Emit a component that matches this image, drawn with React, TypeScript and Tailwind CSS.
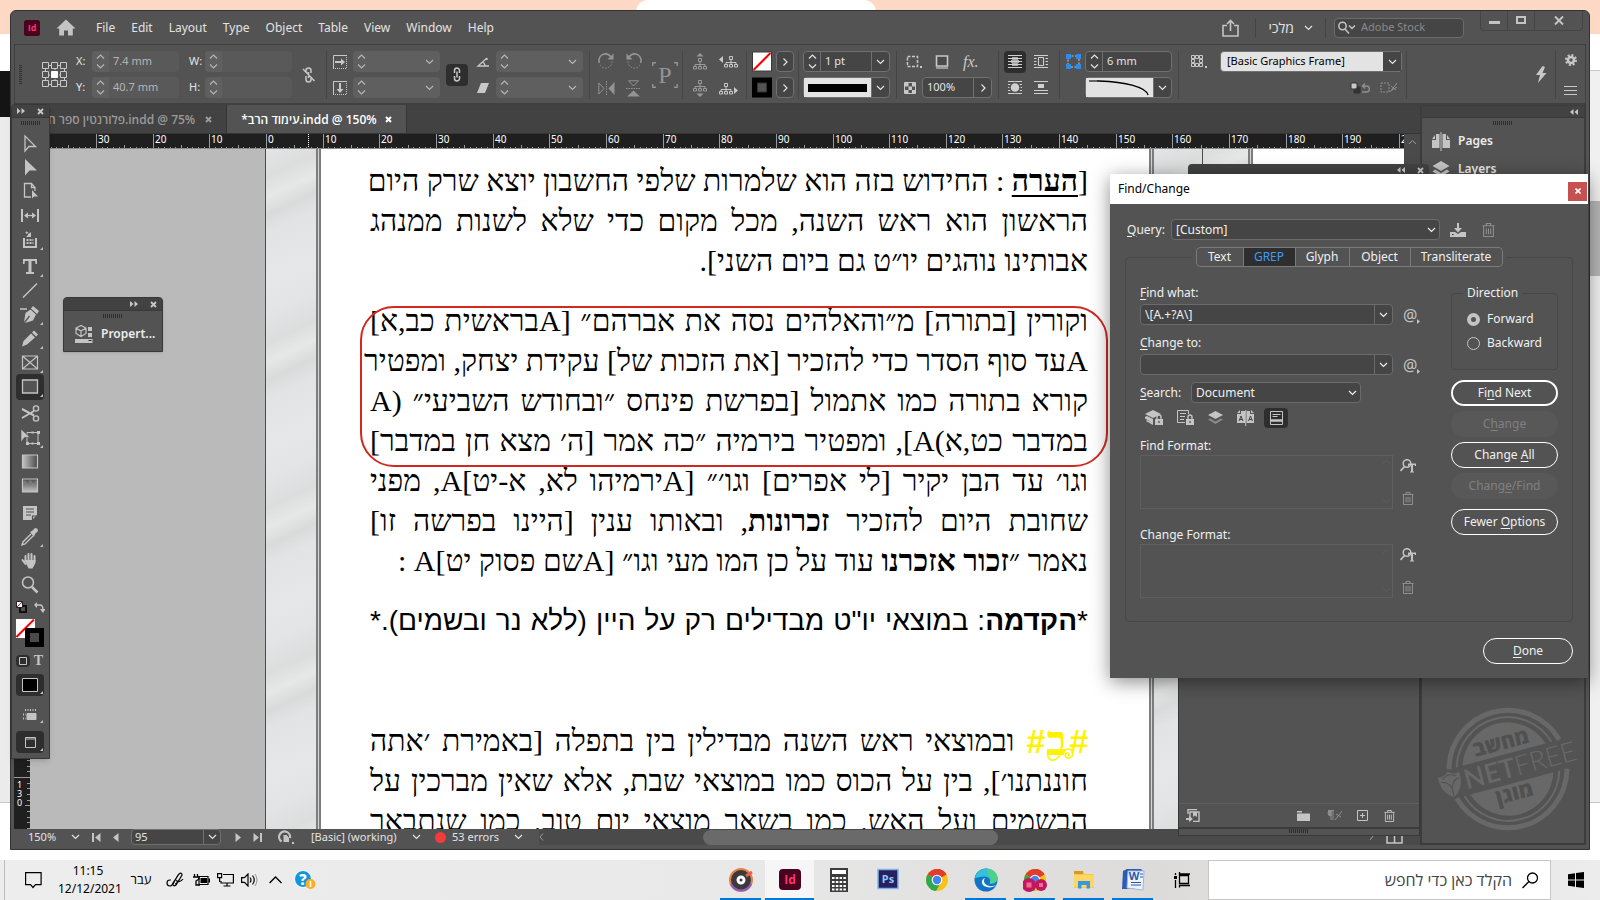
import { useState } from "react";
import type { ReactNode } from "react";

interface IconProps {
  w: number;
  h: number;
  children: ReactNode;
  className?: string;
}

function Icon({ w, h, children, className = "" }: IconProps) {
  return (
    <svg width={w} height={h} viewBox={`0 0 ${w} ${h}`} className={`shrink-0 ${className}`} fill="none" stroke="currentColor" aria-hidden="true">
      {children}
    </svg>
  );
}

function ChevronDown({ className = "" }: { className?: string }) {
  return (
    <Icon w={9} h={6} className={className}>
      <path d="M1 1l3.5 3.5L8 1" strokeWidth="1.2" />
    </Icon>
  );
}

function ChevronRight() {
  return (
    <Icon w={6} h={10}>
      <path d="M1.5 1.5L5 5 1.5 8.5" strokeWidth="1.2" />
    </Icon>
  );
}

function Steppers({ className = "" }: { className?: string }) {
  return (
    <span className={`flex w-[17px] shrink-0 items-center justify-center ${className}`}>
      <Icon w={9} h={15}>
        <path d="M1 4.5L4.5 1 8 4.5M1 10.5L4.5 14 8 10.5" strokeWidth="1.2" />
      </Icon>
    </span>
  );
}

function Sep() {
  return <span className="h-12 w-px shrink-0 bg-[#454545]" />;
}

function Grip({ className = "" }: { className?: string }) {
  return (
    <Icon w={20} h={4} className={className}>
      <path d="M0.5 0v4M2.5 0v4M4.5 0v4M6.5 0v4M8.5 0v4M10.5 0v4M12.5 0v4M14.5 0v4M16.5 0v4M18.5 0v4" stroke="#2e2e2e" />
    </Icon>
  );
}

function PanelHead({ left = false, className = "" }: { left?: boolean; className?: string }) {
  return (
    <div className={`flex h-[13px] items-center justify-end gap-3 border-b border-[#383838] bg-[#424242] pr-[5px] text-[#c8c8c8] ${className}`}>
      <button aria-label="Collapse panel">
        <Icon w={8} h={6}>
          {left ? (
            <path d="M3.5 0L0 3l3.5 3zM8 0L4.5 3 8 6z" fill="currentColor" stroke="none" />
          ) : (
            <path d="M0 0l3.5 3L0 6zM4.5 0L8 3 4.5 6z" fill="currentColor" stroke="none" />
          )}
        </Icon>
      </button>
      <button aria-label="Close panel">
        <Icon w={7} h={7}>
          <path d="M1 1l5 5M6 1L1 6" strokeWidth="1.8" />
        </Icon>
      </button>
    </div>
  );
}

function InDesignLogo({ size }: { size: number }) {
  return (
    <svg width={size} height={size} viewBox="0 0 16 16" aria-hidden="true" className="shrink-0">
      <rect width="16" height="16" rx="2.5" fill="#49021f" />
      <text x="8" y="11.2" textAnchor="middle" fontSize="9" fontWeight="700" fill="#ff3366" stroke="none" className="font-['Open_Sans',sans-serif]">Id</text>
    </svg>
  );
}

function TrashIcon({ w = 12, h = 13 }: { w?: number; h?: number }) {
  return (
    <svg width={w} height={h} viewBox="0 0 12 13" fill="none" stroke="currentColor" aria-hidden="true" className="shrink-0">
      <path d="M0.5 2.5h11M4 2.5v-2h4v2M1.5 2.5v10h9v-10M4 5v5.5M6 5v5.5M8 5v5.5" />
    </svg>
  );
}

const menus = ["File", "Edit", "Layout", "Type", "Object", "Table", "View", "Window", "Help"];

function TitleBar() {
  return (
    <header className="flex h-[33px] shrink-0 items-center pl-[13px] pr-1.5 text-[#e3e3e3]">
      <InDesignLogo size={16} />
      <button aria-label="Home" className="ml-4 text-[#c4c4c4]">
        <Icon w={20} h={17}>
          <path d="M10 0.5L0.5 9.5h2.7V16.5H8v-5h4v5h4.8V9.5h2.7z" fill="currentColor" stroke="none" />
        </Icon>
      </button>
      <nav className="ml-5 flex gap-4 text-xs">
        {menus.map((m) => (
          <button key={m}>{m}</button>
        ))}
      </nav>
      <div className="ml-auto flex items-center">
        <button aria-label="Share" className="text-[#c4c4c4]">
          <Icon w={17} h={18}>
            <path d="M5 6.5H1v10.5h15V6.5h-4M8.5 12V1.5M5 5l3.5-3.5L12 5" strokeWidth="1.6" />
          </Icon>
        </button>
        <span className="ml-4 h-5 w-px bg-[#454545]" />
        <button className="mx-3 flex items-center gap-2.5 text-sm">
          <span className="font-['Open_Sans',sans-serif]">מלכי</span>
          <ChevronDown />
        </button>
        <span className="h-5 w-px bg-[#454545]" />
        <label className="ml-2 flex h-5 w-[130px] items-center gap-1 rounded-sm border border-[#6b6b6b] bg-[#454545] px-0.5 text-[#c4c4c4]">
          <Icon w={20} h={13}>
            <circle cx="5.5" cy="5" r="3.7" strokeWidth="1.5" />
            <path d="M8 8l4 4.5M12 4.5l3 3 3-3" strokeWidth="1.5" />
          </Icon>
          <input aria-label="Search Adobe Stock" placeholder="Adobe Stock" className="w-full min-w-0 bg-transparent text-[11px] outline-none placeholder:text-[#8a8a8a]" />
        </label>
        <div className="mb-3.5 ml-4 flex h-5 rounded-b border border-t-0 border-[#454545] text-[#c4c4c4]">
          <button aria-label="Minimize" className="flex w-[27px] items-center justify-center border-r border-[#454545]">
            <Icon w={11} h={10}><path d="M0 7.5h11" strokeWidth="3" /></Icon>
          </button>
          <button aria-label="Maximize" className="flex w-[27px] items-center justify-center border-r border-[#454545]">
            <Icon w={10} h={8}><path d="M1 1h8v6H1z" strokeWidth="2" /></Icon>
          </button>
          <button aria-label="Close" className="flex w-[47px] items-center justify-center">
            <Icon w={10} h={9}><path d="M1 0.5l8 8M9 0.5l-8 8" strokeWidth="2" /></Icon>
          </button>
        </div>
      </div>
    </header>
  );
}

function DimField({ label, value }: { label: string; value: string }) {
  return (
    <label className="flex h-[21px] items-center text-[11px] text-[#e3e3e3]">
      <span className="w-4">{label}</span>
      <span className="flex h-full w-[87px] overflow-hidden rounded-sm bg-[#595959] text-[#b5b5b5]">
        <Steppers className="bg-[#5f5f5f]" />
        <input defaultValue={value} className="w-full min-w-0 bg-transparent pl-1 outline-none" />
      </span>
    </label>
  );
}

function FlatCombo({ label }: { label: string }) {
  return (
    <span className="flex h-[21px] w-[87px] items-center rounded-sm bg-[#5f5f5f] text-[#b5b5b5]">
      <Steppers />
      <input aria-label={label} className="w-full min-w-0 bg-transparent outline-none" />
      <ChevronDown className="mr-1.5" />
    </span>
  );
}

function SquareButton({ label, children }: { label: string; children: ReactNode }) {
  return (
    <button aria-label={label} className="flex h-[21px] w-[18px] shrink-0 items-center justify-center rounded-sm border border-[#707070] bg-[#454545] text-[#e3e3e3]">
      {children}
    </button>
  );
}

function TextBars({ children }: { children?: ReactNode }) {
  return (
    <Icon w={14} h={14} className="text-[#d0d0d0]">
      <path d="M0 .5h14M0 3.5h14M0 6.5h14M0 9.5h14M0 12.5h14" />
      {children}
    </Icon>
  );
}

function Org({ arrow }: { arrow: "up" | "down" | "left" | "right" }) {
  const side = arrow === "left" || arrow === "right";
  const heads = {
    up: "M7 0l3.5 3.5h-7z",
    down: "M7 17l3.5-3.5h-7z",
    left: "M4 3v7L0 6.5z",
    right: "M15 7v7l4-3.5z",
  };
  const x = arrow === "left" ? 5 : 0;
  const y = arrow === "up" ? 5 : arrow === "down" ? 0 : 3;
  return (
    <Icon w={side ? 19 : 14} h={17} className={side ? "text-[#c8c8c8]" : "text-[#9a9a9a]"}>
      <path d={heads[arrow]} fill="currentColor" stroke="none" />
      <g transform={`translate(${x} ${y})`}>
        <path d="M5.5 .5h3v3h-3zM7 3.5v5M2 8.5v-2h10v2M.5 8.5h3v2.5h-3zM5.5 8.5h3v2.5h-3zM10.5 8.5h3v2.5h-3z" />
      </g>
    </Icon>
  );
}

function ControlBar() {
  return (
    <div className="mx-[3px] flex h-[61px] shrink-0 items-center border border-b-2 border-[#404040] pt-px text-[11px] text-[#c8c8c8]">
      <Icon w={3} h={20} className="ml-1">
        <path d="M0 .5h3M0 2.5h3M0 4.5h3M0 6.5h3M0 8.5h3M0 10.5h3M0 12.5h3M0 14.5h3M0 16.5h3M0 18.5h3" stroke="#303030" />
      </Icon>
      <Icon w={26} h={26} className="ml-5">
        <path d="M3.5 3.5h19v19h-19zM13 3v19M3 13h19" />
        <path d="M.5 .5h6v6h-6zM9.5 .5h6v6h-6zM18.5 .5h6v6h-6zM.5 9.5h6v6h-6zM18.5 9.5h6v6h-6zM.5 18.5h6v6h-6zM9.5 18.5h6v6h-6zM18.5 18.5h6v6h-6z" fill="#535353" />
        <path d="M8 8h9v9H8z" fill="#535353" stroke="none" />
        <path d="M9.5 9.5h6v6h-6z" fill="#fff" stroke="#fff" />
      </Icon>
      <div className="ml-2 flex flex-col gap-[5px]">
        <DimField label="X:" value="7.4 mm" />
        <DimField label="Y:" value="40.7 mm" />
      </div>
      <div className="ml-2.5 flex flex-col gap-[5px]">
        <DimField label="W:" value="" />
        <DimField label="H:" value="" />
      </div>
      <button aria-label="Constrain proportions" className="ml-2.5">
        <Icon w={14} h={16}>
          <path d="M4 5V3.5a2.5 2.5 0 015 0V6M4 9v3.5a2.5 2.5 0 005 0V10M6.5 5v6M1 2l11.5 12" strokeWidth="1.5" />
        </Icon>
      </button>
      <span className="w-2.5" />
      <Sep />
      <div className="ml-1.5 flex flex-col gap-3">
        <Icon w={14} h={14}>
          <path d="M.5 14V.5H14" />
          <path d="M13.5 2v11.5H1" strokeDasharray="1 1" />
          <path d="M2 7h6" strokeWidth="2" />
          <path d="M8 3.5L12 7l-4 3.5z" fill="currentColor" stroke="none" />
        </Icon>
        <Icon w={14} h={14}>
          <path d="M.5 14V.5H14" />
          <path d="M13.5 2v11.5H1" strokeDasharray="1 1" />
          <path d="M7 2v6" strokeWidth="2" />
          <path d="M3.5 8L7 12l3.5-4z" fill="currentColor" stroke="none" />
        </Icon>
      </div>
      <div className="ml-1.5 flex flex-col gap-[5px]">
        <FlatCombo label="Scale X" />
        <FlatCombo label="Scale Y" />
      </div>
      <button aria-label="Link scale" className="ml-1.5 flex size-[22px] items-center justify-center rounded-sm bg-[#2e2e2e]">
        <Icon w={8} h={15}>
          <path d="M1.5 6V3.5a2.5 2.5 0 015 0V6M1.5 9v2.5a2.5 2.5 0 005 0V9M4 4.5v6" strokeWidth="1.5" />
        </Icon>
      </button>
      <div className="ml-2 flex flex-col items-center gap-4">
        <Icon w={14} h={10}><path d="M11 1L2 9h11M6 5q3 1 3 4M11 1v2" strokeWidth="1.3" /></Icon>
        <Icon w={14} h={10}><path d="M5 0h8L9 10H1z" fill="currentColor" stroke="none" /></Icon>
      </div>
      <div className="ml-1.5 flex flex-col gap-[5px]">
        <FlatCombo label="Rotation" />
        <FlatCombo label="Shear" />
      </div>
      <span className="w-1.5" />
      <Sep />
      <div className="ml-2 grid grid-cols-2 gap-x-2.5 gap-y-2.5 text-[#949494]">
        <Icon w={17} h={17}>
          <path d="M1.5 10A6.5 6.5 0 0113 4" strokeWidth="1.6" />
          <path d="M15.5 0.5v6h-6z" fill="currentColor" stroke="none" />
          <path d="M2 12a6.5 6.5 0 0012-4" strokeDasharray="1.5 1.5" />
        </Icon>
        <Icon w={17} h={17}>
          <path d="M15.5 10A6.5 6.5 0 004 4" strokeWidth="1.6" />
          <path d="M1.5 0.5v6h6z" fill="currentColor" stroke="none" />
          <path d="M15 12a6.5 6.5 0 01-12-4" strokeDasharray="1.5 1.5" />
        </Icon>
        <Icon w={17} h={17}>
          <path d="M.8 3v11L6 8.5z" />
          <path d="M16.5 2v13L10.5 8.5z" fill="currentColor" stroke="none" />
          <path d="M8.5 1v15" strokeDasharray="1.5 1" />
        </Icon>
        <Icon w={17} h={17}>
          <path d="M3.5 .8h10L8.5 6z" />
          <path d="M2 16.5h13L8.5 10.5z" fill="currentColor" stroke="none" />
          <path d="M1 8.5h15" strokeDasharray="1.5 1" />
        </Icon>
      </div>
      <span className="relative ml-2.5 flex size-[26px] items-center justify-center font-['Liberation_Serif',serif] text-2xl leading-none text-[#949494]">
        P
        <Icon w={26} h={26} className="absolute inset-0">
          <path d="M.8 4V.8H4M22 .8h3.2V4M.8 22v3.2H4M22 25.2h3.2V22" strokeWidth="1.4" />
        </Icon>
      </span>
      <span className="w-1" />
      <Sep />
      <div className="ml-2.5 grid grid-cols-[14px_19px] gap-x-3 gap-y-2.5">
        <Org arrow="up" />
        <Org arrow="left" />
        <Org arrow="down" />
        <Org arrow="right" />
      </div>
      <span className="w-2" />
      <Sep />
      <div className="ml-[5px] grid grid-cols-[20px_18px] items-center gap-x-1 gap-y-[5px]">
        <Icon w={20} h={21}>
          <path d="M.5 1h19v19H.5z" fill="#fff" stroke="#3a3a3a" />
          <path d="M1.5 19L18.5 2" stroke="#f00" strokeWidth="2" />
        </Icon>
        <SquareButton label="Fill options"><ChevronRight /></SquareButton>
        <Icon w={20} h={21}>
          <path d="M0 .5h20v20H0z" fill="#000" stroke="none" />
          <path d="M5.5 6h9v9h-9z" fill="#535353" stroke="#333" />
        </Icon>
        <SquareButton label="Stroke options"><ChevronRight /></SquareButton>
      </div>
      <span className="w-1" />
      <Sep />
      <div className="ml-1 flex flex-col gap-[5px]">
        <div className="flex h-[21px] w-[87px] rounded-sm border border-[#707070] bg-[#454545] text-[#e3e3e3]">
          <Steppers className="border-r border-[#707070]" />
          <input aria-label="Stroke weight" defaultValue="1 pt" className="w-full min-w-0 bg-transparent pl-1 outline-none" />
          <button aria-label="Weights" className="flex w-[18px] shrink-0 items-center justify-center border-l border-[#707070]"><ChevronDown /></button>
        </div>
        <div className="flex h-[21px] w-[87px] rounded-sm border border-[#707070] bg-[#454545] text-[#e3e3e3]">
          <span className="flex flex-1 items-center bg-[#e3e3e3] px-1"><span className="h-2 w-full bg-black" /></span>
          <button aria-label="Stroke type" className="flex w-[18px] items-center justify-center border-l border-[#707070]"><ChevronDown /></button>
        </div>
      </div>
      <span className="w-1.5" />
      <Sep />
      <div className="ml-[7px] flex flex-col gap-[5px]">
        <div className="flex h-[21px] items-center gap-3 pl-0.5">
          <Icon w={17} h={14}>
            <path d="M1.5 1.5h10v10h-10z" strokeWidth="1.5" strokeDasharray="3 1.5" />
            <path d="M14 11h2v2h-2z" fill="currentColor" stroke="none" />
          </Icon>
          <Icon w={14} h={14}>
            <path d="M1.5 1h11v10h-11z" fill="#4a4a4a" strokeWidth="1.6" />
            <path d="M1 13h12" stroke="#9a9a9a" strokeWidth="2" />
          </Icon>
          <button className="ml-0.5 font-['Liberation_Serif',serif] text-base italic leading-none">fx.</button>
        </div>
        <div className="flex h-[21px] items-center gap-1.5">
          <Icon w={12} h={12}>
            <path d="M.5 .5h11v11H.5z" />
            <path d="M1 1h3.5v3.5H1zM8 1h3v3.5H8zM4.5 4.5H8V8H4.5zM1 8h3.5v3H1zM8 8h3v3H8z" fill="currentColor" stroke="none" />
          </Icon>
          <div className="flex h-full w-[70px] rounded-sm border border-[#707070] bg-[#454545] text-[#e3e3e3]">
            <input aria-label="Opacity" defaultValue="100%" className="w-full min-w-0 bg-transparent pl-1 outline-none" />
            <button aria-label="Opacity slider" className="flex w-[18px] shrink-0 items-center justify-center border-l border-[#707070]"><ChevronRight /></button>
          </div>
        </div>
      </div>
      <span className="w-1.5" />
      <Sep />
      <div className="ml-[5px] grid grid-cols-2 gap-x-1 gap-y-1">
        <button aria-label="No text wrap" className="flex size-[22px] items-center justify-center rounded-sm bg-[#2e2e2e]">
          <TextBars><path d="M4 3.5h6M3 6.5h8M4 9.5h6" strokeWidth="2.4" /></TextBars>
        </button>
        <button aria-label="Wrap around bounding box" className="flex size-[22px] items-center justify-center">
          <TextBars><path d="M3.5 2h7v9h-7z" fill="#535353" stroke="#535353" strokeWidth="2" /><path d="M4.5 2.5h5v8h-5z" /></TextBars>
        </button>
        <button aria-label="Wrap around shape" className="flex size-[22px] items-center justify-center">
          <TextBars><circle cx="7" cy="6.5" r="5" fill="currentColor" stroke="#535353" strokeWidth="1.5" /></TextBars>
        </button>
        <button aria-label="Jump object" className="flex size-[22px] items-center justify-center">
          <Icon w={14} h={14} className="text-[#d0d0d0]"><path d="M0 .5h14M0 9.5h14M0 12.5h14" /><path d="M4 3h6v4H4z" fill="currentColor" stroke="none" /></Icon>
        </button>
      </div>
      <span className="w-[7px]" />
      <Sep />
      <div className="ml-1.5 flex flex-col gap-[5px]">
        <div className="flex h-[21px] items-center gap-1">
          <Icon w={15} h={15}>
            <path d="M2 2h11v11H2z" strokeDasharray="2 1.5" />
            <path d="M0 0h5v5H0zM10 0h5v5h-5zM0 10h5v5H0zM10 10h5v5h-5z" fill="#2d8ceb" stroke="none" />
          </Icon>
          <div className="flex h-full w-[87px] rounded-sm border border-[#707070] bg-[#454545] text-[#e3e3e3]">
            <Steppers className="border-r border-[#707070]" />
            <input aria-label="Corner size" defaultValue="6 mm" className="w-full min-w-0 bg-transparent pl-1 outline-none" />
          </div>
        </div>
        <div className="ml-[19px] flex h-[21px] w-[87px] rounded-sm border border-[#707070] bg-[#454545] text-[#e3e3e3]">
          <span className="flex-1 bg-[#e3e3e3]">
            <Icon w={67} h={19}><path d="M3 3h10C40 4 60 9 62 17" stroke="#000" strokeWidth="1.4" /><path d="M3 3h8" stroke="#666" strokeWidth="2" /></Icon>
          </span>
          <button aria-label="Corner shape" className="flex w-[18px] items-center justify-center border-l border-[#707070]"><ChevronDown /></button>
        </div>
      </div>
      <span className="w-1.5" />
      <Sep />
      <div className="ml-3 flex flex-col gap-[5px]">
        <div className="flex h-[21px] items-center gap-3">
          <Icon w={17} h={14}>
            <path d="M.5 .5h3v3h-3zM4.5 .5h3v3h-3zM8.5 .5h3v3h-3zM.5 4.5h3v3h-3zM8.5 4.5h3v3h-3zM.5 8.5h3v3h-3zM4.5 8.5h3v3h-3zM8.5 8.5h3v3h-3z" />
            <path d="M14 11h2v2h-2z" fill="currentColor" stroke="none" />
          </Icon>
          <div className="relative h-full w-[182px]">
            <select aria-label="Object style" className="h-full w-full appearance-none rounded-sm border border-[#707070] bg-[#e3e3e3] px-1.5 text-[11px] text-black outline-none">
              <option>[Basic Graphics Frame]</option>
            </select>
            <span className="pointer-events-none absolute inset-y-px right-px flex w-[18px] items-center justify-center bg-[#454545] text-[#e3e3e3]"><ChevronDown /></span>
          </div>
        </div>
        <div className="flex h-[21px] items-center justify-end gap-2.5 pr-1 text-[#8f8f8f]">
          <Icon w={20} h={12}>
            <path d="M1 1h6v6H1z" fill="#c8c8c8" stroke="#333" />
            <path d="M4 8v3h6V5H8" fill="#333" stroke="#333" />
            <path d="M13 4h3.5a2.5 2.5 0 010 6H12M15 1.5L12.5 4 15 6.5" strokeWidth="1.4" />
          </Icon>
          <Icon w={18} h={12}>
            <path d="M1 1h8v9H1z" strokeDasharray="2 1" />
            <path d="M17 1l-7 9M11 4l5 4M12 8l5-3" />
          </Icon>
        </div>
      </div>
      <span className="w-1" />
      <Sep />
      <div className="ml-auto flex items-center">
        <button aria-label="Quick apply" className="mr-2">
          <Icon w={12} h={17}><path d="M7.5 0L1 9h4L3 17l8.5-10H7.5L10 1z" fill="currentColor" stroke="none" /></Icon>
        </button>
        <Sep />
        <div className="mx-2 flex flex-col items-center gap-5">
          <Icon w={12} h={12}>
            <circle cx="6" cy="6" r="3" strokeWidth="2.6" />
            <circle cx="6" cy="6" r="5" strokeWidth="2" strokeDasharray="2 1.9" />
          </Icon>
          <Icon w={13} h={9}><path d="M0 .5h13M0 4.5h13M0 8.5h13" /></Icon>
        </div>
      </div>
    </div>
  );
}

function DocumentTabs() {
  return (
    <div className="flex h-[29px] shrink-0 border-b border-[#353535] bg-[#424242] pl-[34px] font-['Open_Sans',sans-serif] text-xs font-semibold">
      <div className="flex items-center gap-2.5 border-r border-[#353535] pr-3.5 pt-px text-[#9a9a9a]">
        <button>פלורנטין ספר ח.indd @ 75%</button>
        <button aria-label="Close tab"><Icon w={7} h={7}><path d="M1 1l5 5M6 1L1 6" strokeWidth="2" /></Icon></button>
      </div>
      <div className="flex items-center gap-2 border-r border-[#353535] bg-[#535353] px-3.5 pt-px text-white">
        <button>*עימוד הרב.indd @ 150%</button>
        <button aria-label="Close tab"><Icon w={7} h={7}><path d="M1 1l5 5M6 1L1 6" strokeWidth="2" /></Icon></button>
      </div>
    </div>
  );
}

const RULER_ZERO = 252;
const RULER_STEP = 56.65;

function HorizontalRuler() {
  const ticks = Array.from({ length: 240 }, (_, i) => i - 38);
  return (
    <div className="flex h-[15px] shrink-0 bg-[#4a4a4a]">
      <svg className="block h-full min-w-0 flex-1 bg-[#1f1f1f]" aria-hidden="true">
        {ticks.map((t) => {
          const x = Math.round(RULER_ZERO + (t * RULER_STEP) / 10) + 0.5;
          const top = t % 10 === 0 ? 0 : t % 5 === 0 ? 11 : 13;
          return <line key={t} x1={x} x2={x} y1={top} y2={15} stroke="#9a9a9a" />;
        })}
        <line x1={294.5} x2={294.5} y1={0} y2={15} stroke="#fff" strokeDasharray="1 1" />
        {ticks.filter((t) => t % 10 === 0).map((t) => (
          <text key={t} x={Math.round(RULER_ZERO + (t * RULER_STEP) / 10) + 2} y={9} fontSize={10} fill="#fff">{Math.abs(t)}</text>
        ))}
        <line x1="0" x2="100%" y1="14.5" y2="14.5" stroke="#8a8a8a" />
      </svg>
      <span className="flex w-4 items-center justify-center text-[#9a9a9a]">
        <Icon w={9} h={6}><path d="M1 5l3.5-3.5L8 5" /></Icon>
      </span>
    </div>
  );
}

function VerticalRuler() {
  const ticks = Array.from({ length: 121 }, (_, i) => i - 102);
  return (
    <svg className="h-full w-4 shrink-0 bg-[#1f1f1f]" aria-hidden="true">
      {ticks.map((t) => {
        const y = Math.round(628 + t * 5.665) + 0.5;
        const left = t % 10 === 0 ? 0 : t % 5 === 0 ? 11 : 13;
        return <line key={t} y1={y} y2={y} x1={left} x2={16} stroke="#9a9a9a" />;
      })}
      {["1", "3", "0"].map((d, i) => (
        <text key={d} x={3} y={639 + i * 9} fontSize={9} fill="#fff">{d}</text>
      ))}
    </svg>
  );
}

function Line({ children, natural = false }: { children: ReactNode; natural?: boolean }) {
  return (
    <p className={`h-10 whitespace-nowrap leading-10 ${natural ? "" : "[text-align-last:justify]"}`}>{children}</p>
  );
}

function PageEdge() {
  return <div className="w-[5px] shrink-0 border-x-2 border-[#7d7d7d] bg-[#d5d5d5]" />;
}

const marble =
  "shrink-0 bg-[repeating-linear-gradient(155deg,#e3e4e5_0px,#dcdddd_26px,#e6e7e7_44px,#d9dbdb_60px,#e2e3e4_76px,#e6e7e8_120px,#e3e4e5_150px)]";

function Canvas() {
  return (
    <div className="flex min-h-0 flex-1 overflow-hidden bg-white">
      <VerticalRuler />
      <div className="w-[235px] shrink-0 bg-[#bababa]" />
      <div className={`w-[51px] border-l border-[#4a4a4a] ${marble}`} />
      <PageEdge />
      <article dir="rtl" className="min-w-0 flex-1 overflow-hidden bg-white pl-[49px] pr-[61px] pt-3 font-['Liberation_Serif',serif] text-[30px] text-black">
        <Line>[<b className="underline decoration-2 underline-offset-4">הערה</b> : החידוש בזה הוא שלמרות שלפי החשבון יוצא שרק היום</Line>
        <Line>הראשון הוא ראש השנה, מכל מקום כדי שלא לשנות ממנהג</Line>
        <Line natural>אבותינו נוהגים יו״ט גם ביום השני].</Line>
        <div className="relative mt-5">
          <div className="pointer-events-none absolute -left-2.5 -right-5 top-[5px] h-[161px] rounded-[34px] border-2 border-[#cf2a20]" />
          <Line>וקורין [בתורה] מ״והאלהים נסה את אברהם״ [Aבראשית כב,א]</Line>
          <Line>Aעד סוף הסדר כדי להזכיר [את הזכות של] עקידת יצחק, ומפטיר</Line>
          <Line>קורא בתורה כמו אתמול [בפרשת פינחס ״ובחודש השביעי״ (A</Line>
          <Line>במדבר כט,א)A], ומפטיר בירמיה ״כה אמר [ה׳ מצא חן במדבר]</Line>
          <Line>וגו׳ עד הבן יקיר [לי אפרים] וגו׳״ [Aירמיהו לא, א-יט]A, מפני</Line>
          <Line>שחובת היום להזכיר <b>זכרונות</b>, ובאותו ענין [היינו בפרשה זו]</Line>
          <Line natural>נאמר ״<b>זכור אזכרנו</b> עוד על כן המו מעי וגו״ [Aשם פסוק יט]A :</Line>
        </div>
        <div className="mt-5 font-['Liberation_Sans',sans-serif] text-[28px]">
          <Line>*<b>הקדמה</b>: במוצאי יו"ט מבדילים רק על היין (ללא נר ובשמים).*</Line>
        </div>
        <div className="mt-20">
          <Line>
            <b className="relative inline-flex h-10 items-center gap-0.5 align-top font-['Liberation_Sans',sans-serif] text-[34px] italic leading-10 text-[#fff200]">
              <span>#</span>
              <span className="font-['Liberation_Serif',serif] text-[42px] not-italic leading-10">ב</span>
              <span>#</span>
              <Icon w={28} h={16} className="absolute left-5 top-[26px]">
                <path d="M2 2C0 12 5 15 10 12s7-11 13-10c5 1 5 8 0 9-4 1-5-4-2-5 2 0 3 2 1 3" strokeWidth="1.5" />
              </Icon>
            </b>{" "}
            ובמוצאי ראש השנה מבדילין בין בתפלה [באמירת ׳אתה
          </Line>
          <Line>חוננתנו׳], בין על הכוס כמו במוצאי שבת, אלא שאין מברכין על</Line>
          <Line>הבשמים ועל האש, כמו בשאר מוצאי יום טוב, כמו שנתבאר</Line>
        </div>
      </article>
      <PageEdge />
      <div className={`w-[94px] ${marble}`}>
        <div className="ml-12 h-full border-l border-[#4a4a4a]" />
      </div>
      <PageEdge />
      <div className="w-[151px] shrink-0" />
      <div className="w-4 shrink-0 bg-[#4a4a4a]" />
    </div>
  );
}

function StatusBar() {
  return (
    <div className="flex h-4 shrink-0 items-center bg-[#4a4a4a] text-[11px] leading-4 text-[#e3e3e3]">
      <div className="flex h-full w-[525px] shrink-0 items-center bg-[#535353] text-[#c4c4c4]">
        <button className="ml-3.5 flex w-[52px] items-center justify-between text-[#e3e3e3]">150%<ChevronDown /></button>
        <button aria-label="First page" className="ml-3"><Icon w={9} h={9}><path d="M1 0v9" strokeWidth="2" /><path d="M8.5 0v9L3 4.5z" fill="currentColor" stroke="none" /></Icon></button>
        <button aria-label="Previous page" className="ml-3"><Icon w={6} h={9}><path d="M5.5 0v9L0 4.5z" fill="currentColor" stroke="none" /></Icon></button>
        <span className="ml-3 flex h-full w-[90px] rounded-sm border border-[#707070] bg-[#454545] text-[#e3e3e3]">
          <input aria-label="Page" defaultValue="95" className="w-full min-w-0 bg-transparent pl-[3px] outline-none" />
          <button aria-label="Page list" className="flex w-[17px] shrink-0 items-center justify-center border-l border-[#707070]"><ChevronDown /></button>
        </span>
        <button aria-label="Next page" className="ml-3.5"><Icon w={6} h={9}><path d="M.5 0v9L6 4.5z" fill="currentColor" stroke="none" /></Icon></button>
        <button aria-label="Last page" className="ml-3"><Icon w={9} h={9}><path d="M8 0v9" strokeWidth="2" /><path d="M.5 0v9L6 4.5z" fill="currentColor" stroke="none" /></Icon></button>
        <Icon w={17} h={14} className="ml-4">
          <path d="M3.5 11.5A5.5 5.5 0 1112 8" strokeWidth="2.2" />
          <path d="M5.5 5h3l2.5 2.5V12H5.5z" fill="currentColor" stroke="none" />
          <path d="M14 12h2v2h-2z" fill="currentColor" stroke="none" />
        </Icon>
        <button className="ml-4 flex w-[110px] items-center justify-between text-[#e3e3e3]">[Basic] (working)<ChevronDown /></button>
        <span className="ml-3.5 size-[11px] rounded-full bg-[#f23b3b]" />
        <button className="ml-1.5 flex w-[71px] items-center justify-between text-[#e3e3e3]">53 errors<ChevronDown /></button>
      </div>
      <Icon w={5} h={8} className="text-[#9a9a9a]"><path d="M4 .5L1 4l3 3.5" /></Icon>
      <div className="ml-[159px] h-[15px] w-[295px] rounded-full bg-[#6a6a6a]" />
      <div className="ml-auto mr-[17px] flex items-start gap-3 text-[#a0a0a0]">
        <Icon w={5} h={14}><path d="M4 6L1 10" /></Icon>
        <Icon w={17} h={14} className="text-[#c8c8c8]"><path d="M1 0v13h15V0M8.5 0v13" strokeWidth="1.5" /></Icon>
      </div>
    </div>
  );
}

function NetFreeSeal() {
  return (
    <svg width="140" height="124" viewBox="0 0 140 124" className="text-[#686868]" aria-hidden="true">
      <g transform="rotate(-15 70 62)" fill="none" stroke="currentColor">
        <path d="M13 47A59 59 0 01127 47M13 77A59 59 0 00127 77" strokeWidth="5" />
        <path d="M21 47A51 51 0 01119 47M21 77A51 51 0 00119 77" strokeWidth="2" />
        <path d="M27 47a45 45 0 0186 0zM27 77a45 45 0 0086 0z" fill="currentColor" stroke="none" />
        <text x="70" y="42" textAnchor="middle" fontSize="21" fontWeight="800" fill="#505050" stroke="none" className="font-['Open_Sans',sans-serif]">מחשב</text>
        <text x="70" y="94" textAnchor="middle" fontSize="21" fontWeight="800" fill="#505050" stroke="none" className="font-['Open_Sans',sans-serif]">מוגן</text>
        <path d="M0 52q6 2 11-3 5 5 11 3 1 17-11 23Q-1 69 0 52z" fill="currentColor" stroke="none" />
        <path d="M2 58q6 0 9 8M20 58q-6 0-9 8v8M4 55q7-5 14 0" stroke="#505050" />
        <text x="25" y="71" fontSize="27" fill="currentColor" stroke="none" className="font-['Lato',sans-serif]">
          NET<tspan fontWeight="300">FREE</tspan>
        </text>
      </g>
    </svg>
  );
}

function Dock() {
  return (
    <aside className="flex w-[166px] shrink-0 flex-col border-2 border-t border-[#3c3c3c] bg-[#535353] text-xs font-semibold text-[#ececec]">
      <div className="flex h-3 items-center justify-end border-b border-[#383838] bg-[#424242] pr-1.5">
        <Icon w={8} h={6}><path d="M3.5 0L0 3l3.5 3zM8 0L4.5 3 8 6z" fill="#c8c8c8" stroke="none" /></Icon>
      </div>
      <Grip className="mx-auto mt-[3px]" />
      <button className="ml-2.5 mt-1.5 flex h-5 items-center gap-2">
        <Icon w={18} h={19} className="text-[#c4c4c4]">
          <path d="M9 0v19" />
          <path d="M0 7l3-4v4zM4 2h3.5v14H0V8h4zM18 7l-3-4v4zM14 2h-3.5v14H18V8h-4z" fill="currentColor" stroke="none" />
        </Icon>
        Pages
      </button>
      <button className="ml-2.5 mt-2 flex h-5 items-center gap-2">
        <Icon w={18} h={16} className="text-[#c4c4c4]">
          <path d="M9 0l8.5 5L9 10 .5 5z" fill="currentColor" stroke="none" />
          <path d="M3 8.5l-2.5 2L9 15.5l8.5-5-2.5-2L9 12z" fill="currentColor" stroke="none" />
        </Icon>
        Layers
      </button>
      <div className="mb-3 ml-4 mt-auto"><NetFreeSeal /></div>
    </aside>
  );
}

const toolGroups: { name: string; more?: boolean; active?: boolean; art: ReactNode }[][] = [
  [
    { name: "Selection", art: <path d="M5 2v15l4-4.5h6.5z" strokeWidth="1.3" /> },
    { name: "Direct Selection", art: <path d="M5 1v16.5l4.5-5H17z" fill="currentColor" stroke="none" /> },
    { name: "Page", art: <><path d="M11 15H4.5V1.5h7L15 5.5V9M11.5 1.5v4H15" strokeWidth="1.3" /><path d="M12 8v8.5l2-2H18z" fill="currentColor" stroke="none" /></> },
    { name: "Gap", art: <><path d="M2 3v13M18 3v13" strokeWidth="2" /><path d="M5 9.5h10" strokeWidth="1.3" /><path d="M4 9.5l4-3v6zM16 9.5l-4-3v6z" fill="currentColor" stroke="none" /></> },
    { name: "Content Collector", more: true, art: <><path d="M4 8v9h12V8" strokeWidth="2" /><path d="M6 2l4 3M6.5 10h7M6.5 13h7" strokeWidth="2" strokeDasharray="2 1" /><path d="M11 2v5H6z" fill="currentColor" stroke="none" /></> },
  ],
  [
    { name: "Type", more: true, art: <path d="M3 2h14v5h-1.5L15 4h-3.5v11H14v2H6v-2h2.5V4H5l-.5 3H3z" fill="currentColor" stroke="none" /> },
    { name: "Line", art: <path d="M3 16.5L17 2.5" strokeWidth="1.5" /> },
    { name: "Pen", more: true, art: <><path d="M0 4h7" strokeWidth="1.5" /><path d="M13 1l6 5-2 3-6-5.5z" fill="currentColor" stroke="none" /><path d="M10.5 4.5l5.5 5-3 6L5 18l5-6.5-1-1L4 17l1.5-9z" fill="currentColor" stroke="none" /></> },
    { name: "Pencil", more: true, art: <path d="M14 1.5l4 4-2 2-4-4zM11 4.5l4 4-8 7-5 2 1.5-5.5z" fill="currentColor" stroke="none" /> },
    { name: "Rectangle Frame", more: true, art: <path d="M2.5 3h15v13h-15zM2.5 3l15 13M17.5 3l-15 13" strokeWidth="1.2" /> },
    { name: "Rectangle", more: true, active: true, art: <path d="M2.5 3h15v13h-15z" strokeWidth="1.3" fill="#535353" /> },
  ],
  [
    { name: "Scissors", art: <><path d="M2 5l12 6.5M2 14L14 7" strokeWidth="2" /><circle cx="16" cy="4.5" r="2.6" strokeWidth="1.4" /><circle cx="16" cy="14.5" r="2.6" strokeWidth="1.4" /></> },
    { name: "Free Transform", more: true, art: <><path d="M7 4.5h11v11H7z" /><path d="M6 14h3v3H6zM17 3h3v3h-3zM17 14h3v3h-3zM11.5 3.5h2v2h-2zM11.5 14.5h2v2h-2z" fill="currentColor" stroke="none" /><path d="M1 1v13l3.5-4.5H10z" fill="currentColor" stroke="#535353" strokeWidth=".6" /></> },
    {
      name: "Gradient",
      art: (
        <>
          <defs><linearGradient id="gh"><stop offset="0" stopColor="#c4c4c4" /><stop offset="1" stopColor="#4a4a4a" /></linearGradient></defs>
          <path d="M2.5 3h15v13h-15z" fill="url(#gh)" strokeWidth="1.2" />
        </>
      ),
    },
    {
      name: "Gradient Feather",
      art: (
        <>
          <defs><linearGradient id="gv" x2="0" y2="1"><stop offset="0" stopColor="#4a4a4a" /><stop offset="1" stopColor="#c4c4c4" /></linearGradient></defs>
          <path d="M2.5 3h15v13h-15z" fill="url(#gv)" strokeWidth="1.2" />
          <path d="M3 6h14M6 9h11" stroke="#8a8a8a" strokeWidth="3" strokeDasharray="3 3" opacity=".5" />
        </>
      ),
    },
  ],
  [
    { name: "Note", art: <><path d="M3 3h14v9l-5 5H3z" fill="currentColor" stroke="none" /><path d="M6 6h8M6 9h8M6 12h5M12.5 17v-4H17" stroke="#535353" strokeWidth="1.2" /></> },
    { name: "Eyedropper", more: true, art: <><path d="M11 7l-8 8-1 3 3-1 8-8" strokeWidth="1.4" /><path d="M10 5l2-1 3-3q3 0 3 3l-3 3-1 3z" fill="currentColor" stroke="none" /></> },
    { name: "Hand", art: <><path d="M5.5 10V5M8.5 9V3M11.5 9V3M14.5 10V5M2.5 9l3 4" strokeWidth="2" strokeLinecap="round" /><path d="M4.5 9h11v3l-3 5.5h-4z" fill="currentColor" stroke="none" /></> },
    { name: "Zoom", art: <><circle cx="8" cy="7.5" r="5.5" strokeWidth="1.5" /><path d="M12 12l5.5 5.5" strokeWidth="2.5" /></> },
  ],
];

function Corner() {
  return (
    <Icon w={3} h={3} className="absolute bottom-0.5 right-px"><path d="M3 0v3H0z" fill="currentColor" stroke="none" /></Icon>
  );
}

function ToolsPanel() {
  return (
    <div className="absolute left-0 top-[93px] z-10 w-[39px] rounded-t border border-[#383838] bg-[#535353] pb-[5px] text-[#c4c4c4] shadow-md">
      <PanelHead className="rounded-t" />
      <Grip className="mx-auto mt-[3px]" />
      <div className="mt-[7px] flex flex-col gap-[3px]">
        {toolGroups.map((group, i) => (
          <div key={i} className="flex flex-col">
            {group.map((t) => (
              <button key={t.name} aria-label={t.name} className="relative ml-1 mr-[5px] flex h-6 items-center justify-center">
                {t.active && <span className="absolute inset-x-0 -inset-y-px rounded-sm bg-[#2e2e2e]" />}
                <Icon w={20} h={20} className="relative">{t.art}</Icon>
                {t.more && <Corner />}
              </button>
            ))}
          </div>
        ))}
      </div>
      <div className="mx-1 mt-0.5 flex h-4 items-center justify-between">
        <Icon w={11} h={12}>
          <path d="M4 5h6v6H4z" stroke="#111" strokeWidth="2" />
          <path d="M.5 .5h6v6h-6z" fill="#fff" stroke="#222" />
          <path d="M1 6l5-5" stroke="#f00" />
        </Icon>
        <Icon w={11} h={12}><path d="M2 4h4q3 0 3 5" strokeWidth="1.4" /><path d="M3 1v6L0 4zM6 8h5.5L9 12z" fill="currentColor" stroke="none" /></Icon>
      </div>
      <Icon w={28} h={28} className="ml-1 mt-1">
        <path d="M0 0h19v19H0z" fill="#fff" stroke="none" />
        <path d="M0.5 18L18 .5" stroke="#f00" strokeWidth="2" />
        <path d="M9 9h19v19H9z" fill="#000" stroke="none" />
        <path d="M14 14h9v9h-9z" fill="#4a4a4a" stroke="none" />
      </Icon>
      <div className="mx-1 mt-2 flex h-3 items-center justify-between">
        <span className="flex h-3 w-3.5 items-center justify-center rounded-sm bg-[#2e2e2e]"><Icon w={8} h={8}><path d="M.5 .5h7v7h-7z" /></Icon></span>
        <span className="pr-0.5 font-['Liberation_Serif',serif] text-sm font-bold leading-3">T</span>
      </div>
      <button aria-label="Apply color" className="relative ml-1 mt-[7px] flex h-[22px] w-7 items-center justify-center rounded-sm bg-[#2e2e2e]">
        <Icon w={16} h={14}><path d="M.5 .5h15v13H.5z" fill="#000" /></Icon>
        <Corner />
      </button>
      <button aria-label="View options" className="relative ml-1 mt-[7px] flex h-[22px] w-7 items-center justify-center">
        <Icon w={14} h={11}><path d="M4 4.5h9v6H4z" fill="currentColor" /><path d="M2 1h12M0 5.5h3M0 9.5h3" strokeDasharray="1 1.5" strokeWidth="2" /></Icon>
        <Corner />
      </button>
      <button aria-label="Screen mode" className="relative ml-1 mt-1.5 flex h-[22px] w-7 items-center justify-center rounded-sm bg-[#2e2e2e]">
        <Icon w={11} h={11}><path d="M.5 .5h10v10H.5zM.5 2h10" /></Icon>
        <Corner />
      </button>
    </div>
  );
}

function PropertiesPanel() {
  return (
    <div className="absolute left-[52px] top-[286px] z-10 h-[55px] w-[100px] rounded-t border border-[#383838] bg-[#535353] shadow">
      <PanelHead className="rounded-t" />
      <Grip className="mx-auto mt-[3px]" />
      <button className="ml-[11px] mt-[7px] flex items-center gap-2 text-xs font-semibold text-[#ececec]">
        <Icon w={18} h={18} className="text-[#c4c4c4]">
          <path d="M6 .5l5 2.5v5.5L6 11.5 1 8.5V3zM1 3l5 3 5-3M6 6v5.5" strokeWidth="1.2" />
          <path d="M13 2h4v4h-4zM13 8h4v4h-4zM0 14h17.5v4H0z" fill="currentColor" stroke="none" />
          <path d="M13.5 15.5h3" stroke="#333" />
        </Icon>
        Propert...
      </button>
    </div>
  );
}

function ParagraphPanel() {
  return (
    <div className="absolute bottom-[13px] right-[169px] z-10 flex h-[210px] w-[242px] flex-col border border-[#383838] bg-[#535353]">
      <div className="flex-1" />
      <div className="flex h-6 items-center gap-[15px] border-t border-[#5f5f5f] pl-[7px] pr-6 text-[#c4c4c4]">
        <button aria-label="Load styles" className="mr-auto"><Icon w={14} h={13}><path d="M2 5V.5h9M4 9V3h9v9.5H7" strokeWidth="1.4" /><path d="M7 3h4v5L9 6.5 7 8zM3 7l4 3-4 3zM0 9h4v2H0z" fill="currentColor" stroke="none" /></Icon></button>
        <button aria-label="New group"><Icon w={13} h={10}><path d="M0 0h5v1.5H0zM0 2.5h13V10H0z" fill="currentColor" stroke="none" /></Icon></button>
        <button aria-label="Clear overrides" className="text-[#8f8f8f]"><Icon w={17} h={11}><path d="M6 0v10M8 0v10M3 .5h6" /><path d="M6 0v6a3 3 0 010-6z" fill="currentColor" /><path d="M17 1l-7 9M11 4l5 3" /></Icon></button>
        <button aria-label="New style"><Icon w={11} h={11}><path d="M.5 .5h10v10H.5zM5.5 3v5M3 5.5h5" /></Icon></button>
        <button aria-label="Delete style" className="ml-px"><TrashIcon w={11} h={12} /></button>
      </div>
      <div className="h-2 border-t-2 border-[#3c3c3c]"><Grip className="mx-auto" /></div>
    </div>
  );
}

function GrepMenuButton() {
  return (
    <button aria-label="Special characters" className="flex items-end text-base leading-[18px] text-[#c4c4c4]">
      @
      <Icon w={3} h={5}><path d="M0 0l3 2.5L0 5z" fill="currentColor" stroke="none" /></Icon>
    </button>
  );
}

function ComboInput({ id, value }: { id: string; value: string }) {
  return (
    <div className="flex h-[21px] w-[253px] rounded-sm border border-[#6b6b6b] bg-[#454545]">
      <input id={id} defaultValue={value} className="w-full min-w-0 bg-transparent pl-1 outline-none" />
      <button aria-label="Recent" className="flex w-[18px] shrink-0 items-center justify-center border-l border-[#6b6b6b]"><ChevronDown /></button>
    </div>
  );
}

function FormatBox({ label, id }: { label: string; id: string }) {
  return (
    <div>
      <label htmlFor={id} className="block h-[19px] leading-5">{label}</label>
      <div className="flex gap-[7px]">
        <div className="relative h-[54px] w-[253px]">
          <textarea id={id} readOnly className="block h-full w-full resize-none border border-[#5f5f5f] bg-transparent outline-none" />
          <span className="absolute bottom-1.5 right-0.5 top-1 flex items-center text-[#5c5c5c]">
            <Icon w={9} h={44}><path d="M1 5l3.5-3.5L8 5M1 40l3.5 3.5L8 40" /></Icon>
          </span>
        </div>
        <div className="flex flex-col items-center justify-between pb-1 pt-1">
          <button aria-label="Specify attributes" className="text-[#c4c4c4]">
            <Icon w={16} h={14}>
              <circle cx="7" cy="4.5" r="3.8" strokeWidth="1.5" />
              <path d="M4.5 7.5L.5 12" strokeWidth="1.7" />
              <path d="M8 4.5h8v2.5h-1L14.5 6H13v6.5h1v1h-4v-1h1V6H9.5L9 7H8z" fill="currentColor" stroke="none" />
            </Icon>
          </button>
          <button aria-label="Clear attributes" className="text-[#8f8f8f]"><TrashIcon w={12} h={13} /></button>
        </div>
      </div>
    </div>
  );
}

const tabs = [
  { name: "Text", width: "w-[46px]" },
  { name: "GREP", width: "w-[52px]" },
  { name: "Glyph", width: "w-[54px]" },
  { name: "Object", width: "w-[61px]" },
  { name: "Transliterate", width: "w-[92px]" },
];

const pill = "block h-[26px] w-full rounded-full";

function FindChangeDialog() {
  const [tab, setTab] = useState("GREP");
  const [direction, setDirection] = useState("Forward");

  return (
    <section role="dialog" aria-label="Find/Change" className="absolute right-px top-[163px] z-20 w-[478px] bg-[#535353] text-xs text-[#f0f0f0] shadow-[0_4px_18px_rgba(0,0,0,0.45)]">
      <div className="flex h-[30px] items-center justify-between bg-white pl-2 pr-px text-black">
        <h2>Find/Change</h2>
        <button aria-label="Close" className="mt-1 flex size-[19px] items-center justify-center bg-[#c75050] text-white">
          <Icon w={6} h={6}><path d="M.5 .5l5 5M5.5 .5l-5 5" strokeWidth="1.6" /></Icon>
        </button>
      </div>

      <div className="px-[15px] pb-[14px] pt-[15px]">
        <div className="flex items-center pl-0.5">
          <label htmlFor="query" className="w-11"><u className="underline-offset-2">Q</u>uery:</label>
          <div className="relative h-[21px] w-[269px]">
            <select id="query" className="h-full w-full appearance-none rounded-sm border border-[#6b6b6b] bg-[#454545] px-1 outline-none">
              <option>[Custom]</option>
            </select>
            <ChevronDown className="pointer-events-none absolute right-1 top-2" />
          </div>
          <button aria-label="Save query" className="ml-2.5 text-[#c4c4c4]">
            <Icon w={16} h={14}>
              <path d="M0 9h5l3 2 3-2h5v5H0z" fill="currentColor" stroke="none" />
              <path d="M8 0v6" strokeWidth="2" />
              <path d="M4 5h8L8 9.5z" fill="currentColor" stroke="none" />
              <path d="M2 11.5h1.5" stroke="#333" />
            </Icon>
          </button>
          <button aria-label="Delete query" className="ml-4 text-[#8f8f8f]"><TrashIcon w={13} h={16} /></button>
        </div>

        <div className="relative z-10 mt-[7px] flex justify-center">
          <div role="tablist" className="flex h-5 rounded-sm border border-[#7a7a7a] bg-[#535353] outline-4 outline-[#535353]">
            {tabs.map((t, i) => (
              <button
                key={t.name}
                role="tab"
                aria-selected={tab === t.name}
                onClick={() => setTab(t.name)}
                className={`${t.width} leading-[18px] ${i > 0 ? "border-l border-[#7a7a7a]" : ""} ${tab === t.name ? "bg-[#2e2e2e] text-[#3f9bf0]" : ""}`}
              >
                {t.name}
              </button>
            ))}
          </div>
        </div>

        <div className="-mt-2.5 flex h-[365px] justify-between rounded-sm border border-[#474747] px-3.5 pt-[25px]">
          <div>
            <label htmlFor="find-what" className="block h-[21px] leading-5"><u className="underline-offset-2">F</u>ind what:</label>
            <div className="flex items-center gap-2.5"><ComboInput id="find-what" value="\[A.+?A\]" /><GrepMenuButton /></div>
            <label htmlFor="change-to" className="mt-2 block h-[21px] leading-5"><u className="underline-offset-2">C</u>hange to:</label>
            <div className="flex items-center gap-2.5"><ComboInput id="change-to" value="" /><GrepMenuButton /></div>
            <div className="mt-[7px] flex items-center">
              <label htmlFor="search" className="w-[51px]"><u className="underline-offset-2">S</u>earch:</label>
              <div className="relative h-[21px] w-[170px]">
                <select id="search" className="h-full w-full appearance-none rounded-sm border border-[#6b6b6b] bg-[#454545] px-1 outline-none">
                  <option>Document</option>
                </select>
                <ChevronDown className="pointer-events-none absolute right-1 top-2" />
              </div>
            </div>
            <div className="mt-[5px] flex items-center gap-3.5 pl-[5px] text-[#c4c4c4]">
              <button aria-label="Include locked layers">
                <Icon w={18} h={16}><path d="M8 0l8 4-8 4-8-4zM0 7l2-1 6 3v4L0 8.5zM2 10l6 3V15L1 11z" fill="currentColor" stroke="none" /><path d="M10 9h8v6h-8z" fill="currentColor" stroke="none" /><path d="M12 9V7a2 2 0 014 0v2" strokeWidth="1.4" /><path d="M14 11v2" stroke="#333" /></Icon>
              </button>
              <button aria-label="Include locked stories">
                <Icon w={17} h={16}><path d="M8 12.5H.5v-12h11V4M3 3.5h6M3 6.5h5M3 9.5h4" /><path d="M9 9h8v6H9z" fill="currentColor" stroke="none" /><path d="M11 9V7a2 2 0 014 0v2" strokeWidth="1.4" /><path d="M13 11v2" stroke="#333" /></Icon>
              </button>
              <button aria-label="Include hidden layers">
                <Icon w={15} h={14}><path d="M7.5 0L15 4 7.5 8 0 4z" fill="currentColor" stroke="none" /><path d="M0 8.5l2-1 5.5 3 5.5-3 2 1-7.5 4.5z" fill="#8a8a8a" stroke="none" /></Icon>
              </button>
              <button aria-label="Include master pages">
                <Icon w={17} h={16}><path d="M0 3l3-3v3zM4 1h4v12H0V4h4zM17 3l-3-3v3zM13 1H9.5v12H17V4h-4z" fill="currentColor" stroke="none" /><path d="M8.7 0v16" /><path d="M2 11l2-5 2 5M2.8 9.5h2.5M11.5 11l2-5 2 5M12.2 9.5h2.5" stroke="#444" /></Icon>
              </button>
              <button aria-label="Include footnotes" className="-ml-1 flex h-5 w-6 items-center justify-center rounded-sm bg-[#2e2e2e]">
                <Icon w={13} h={14}><path d="M.5 .5h12v13H.5zM2.5 3.5h8M2.5 5.5h5" /><path d="M1 9.5h11" strokeWidth="2.5" /></Icon>
              </button>
            </div>
            <div className="mt-2"><FormatBox label="Find Format:" id="find-format" /></div>
            <div className="mt-4"><FormatBox label="Change Format:" id="change-format" /></div>
          </div>

          <div className="w-[107px] pt-0.5">
            <fieldset className="h-[85px] rounded-sm border border-[#474747] pl-[15px] pt-1.5">
              <legend className="-ml-1 px-1">Direction</legend>
              {["Forward", "Backward"].map((d) => (
                <label key={d} className="flex h-6 items-center gap-[7px]">
                  <input
                    type="radio"
                    name="direction"
                    checked={direction === d}
                    onChange={() => setDirection(d)}
                    className="size-[13px] appearance-none rounded-full border border-[#c4c4c4] checked:border-[4px]"
                  />
                  {d}
                </label>
              ))}
            </fieldset>
            <button className={`${pill} mt-2.5 border-2 border-white leading-[22px]`}>Fi<u className="underline-offset-2">n</u>d Next</button>
            <button disabled className={`${pill} mt-[5px] bg-[#585858] leading-6 text-[#808080]`}>C<u className="underline-offset-2">h</u>ange</button>
            <button className={`${pill} mt-[5px] border border-white leading-6`}>Change <u className="underline-offset-2">A</u>ll</button>
            <button disabled className={`${pill} mt-[5px] bg-[#585858] leading-6 text-[#808080]`}>Chang<u className="underline-offset-2">e</u>/Find</button>
            <button className={`${pill} mt-2.5 border border-white leading-6`}>Fewer <u className="underline-offset-2">O</u>ptions</button>
          </div>
        </div>

        <button className="ml-auto mt-4 block h-[26px] w-[90px] rounded-full border border-white leading-6"><u className="underline-offset-2">D</u>one</button>
      </div>
    </section>
  );
}

const chromeArt = (
  <>
    <circle cx="12" cy="12" r="11" fill="#fbc116" stroke="none" />
    <path d="M12 12L2.5 6.5A11 11 0 0121.5 6.5z" fill="#e33b2e" stroke="none" />
    <path d="M12 1a11 11 0 019.5 5.5H12z" fill="#e33b2e" stroke="none" />
    <path d="M2.5 6.5A11 11 0 0011 23l4.5-8L12 12z" fill="#2da94f" stroke="none" />
    <circle cx="12" cy="12" r="5.3" fill="#fff" stroke="none" />
    <circle cx="12" cy="12" r="4.2" fill="#4285f4" stroke="none" />
  </>
);

const apps: { name: string; open?: boolean; active?: boolean; art: ReactNode }[] = [
  {
    name: "Music",
    open: true,
    art: (
      <>
        <circle cx="12" cy="12" r="11" fill="#3a3a3d" stroke="#e8804a" strokeWidth="2" />
        <path d="M2 16a11 11 0 0020 0" stroke="#8a5cc8" strokeWidth="2" />
        <circle cx="12" cy="12" r="3" stroke="#fff" strokeWidth="3" />
        <path d="M17 8l6-4" stroke="#e5604d" strokeWidth="3" />
      </>
    ),
  },
  {
    name: "InDesign",
    open: true,
    active: true,
    art: (
      <>
        <rect x="1" y="1" width="22" height="21" rx="4" fill="#49021f" stroke="none" />
        <text x="12" y="16" textAnchor="middle" fontSize="12" fontWeight="700" fill="#ff3366" stroke="none" className="font-['Open_Sans',sans-serif]">Id</text>
      </>
    ),
  },
  {
    name: "Calculator",
    art: (
      <>
        <path d="M3 0h18v24H3z" fill="#3c3c3c" stroke="none" />
        <path d="M5 2h14v4H5z" fill="#fff" stroke="none" />
        <path d="M5 10h14M5 14h14M5 18h14M5 21.5h14" stroke="#fff" strokeWidth="2" strokeDasharray="2.5 1.3" />
      </>
    ),
  },
  {
    name: "Photoshop",
    art: (
      <>
        <path d="M2 1.5h20v19H2z" fill="#26205f" stroke="#7fb4ec" strokeWidth="1.5" />
        <text x="12" y="15" textAnchor="middle" fontSize="11" fontWeight="700" fill="#8ec9ff" stroke="none">Ps</text>
      </>
    ),
  },
  { name: "Chrome", art: chromeArt },
  {
    name: "Edge",
    open: true,
    art: (
      <>
        <circle cx="12" cy="12" r="11.5" fill="#1173c4" stroke="none" />
        <path d="M1 10C2 4 7 .5 12 .5c7 0 12 5 11.5 10 0 4-4 6-8 5 2-4-1-7-5-7S3 10 1 10z" fill="#35c1d8" stroke="none" />
        <path d="M13 1c7 0 11 5 10.5 10-.5 3-4 5-8 4 2-3 1-6-1-8z" fill="#5bd66c" stroke="none" opacity=".75" />
        <path d="M11 10c-3 4 1 9 8 8l3-1c-3 3-8 3-12 1-3-2-3-7 1-8z" fill="#e8f2fa" stroke="none" />
      </>
    ),
  },
  {
    name: "Screen recorder",
    open: true,
    art: (
      <>
        {chromeArt}
        <circle cx="6" cy="17" r="7" fill="#c2185b" stroke="none" />
        <circle cx="18" cy="17" r="6" fill="#c2185b" stroke="none" />
        <path d="M3.5 14.5h5v5h-5zM16 15h4v4h-4z" fill="#ec6aa0" stroke="none" />
      </>
    ),
  },
  {
    name: "File Explorer",
    open: true,
    art: (
      <>
        <path d="M2 3h9l2 3h9v14H2z" fill="#f9c846" stroke="none" />
        <path d="M2 3h9v3H2z" fill="#d79a20" stroke="none" />
        <path d="M2 7h20v12H2z" fill="#fcd667" stroke="none" />
        <path d="M6 20.5V13h12v7.5h-3.5V17h-5v3.5z" fill="#3a97dd" stroke="none" />
      </>
    ),
  },
  {
    name: "Word",
    open: true,
    art: (
      <>
        <path d="M2 3l4-2h14l2 2-2 18H1z" fill="#2c5db5" stroke="none" />
        <path d="M7 3h16l-1 19-16-2z" fill="#eef3fb" stroke="#9db6dd" />
        <text x="13" y="12" textAnchor="middle" fontSize="11" fontWeight="700" fill="#2b57a8" stroke="none">W</text>
        <path d="M10 14.5h10M10 17h10M19 6h3M19 9h3" stroke="#2b57a8" />
      </>
    ),
  },
];

function Taskbar() {
  return (
    <footer className="relative z-30 flex h-10 shrink-0 items-center bg-[linear-gradient(90deg,#ededed,#e9e9e9_45%,#dddbda_72%,#ececec)] text-black">
      <div className="ml-1 flex h-full flex-1 items-center border-l border-[#bdbdbd]">
        <button aria-label="Notifications" className="ml-5">
          <Icon w={17} h={17}><path d="M.6 .6h15.5v12H10.5L8 15.5 5.5 12.6H.6z" strokeWidth="1.2" /></Icon>
        </button>
        <div className="ml-4 w-[60px] text-center text-xs leading-[18px]">
          <div>11:15</div>
          <div>12/12/2021</div>
        </div>
        <span className="ml-3 w-[22px] text-center font-['Open_Sans',sans-serif] text-[13px]">עבר</span>
        <div className="ml-3.5 flex items-center gap-[7px]">
          <Icon w={18} h={16}><path d="M5 8H4Q1 8 1 11q0 3 3 3 2 0 3-3l6-9q3-2 3 1l-6 10q-3 2-3-1l5-9M9 12q3-1 2-3 3 2 6-2" strokeWidth="1.2" /></Icon>
          <Icon w={17} h={12} className="ml-0.5"><path d="M6 2.5h9v8H6z" strokeWidth="1.2" /><path d="M7.5 4h6.5v5H7.5zM15.5 4.5H17v4h-1.5z" fill="currentColor" stroke="none" /><path d="M1.5 0v3M4.5 0v3M0 3h6v2L3 7v4h4" strokeWidth="1.3" /></Icon>
          <Icon w={17} h={14}><path d="M6 1.5h10.4v8.5H4V8M10 10v3M6.5 13h7M.6 .6h4v4h-4zM2.6 5v4" strokeWidth="1.2" /></Icon>
          <Icon w={17} h={14}><path d="M.6 4.6H3.5L7 1v12L3.5 9.4H.6zM9 4.5q2 2.5 0 5M11.5 2.5q3.5 4.5 0 9" strokeWidth="1.2" /><path d="M14 1q4 6 0 12" stroke="#999" /></Icon>
          <Icon w={13} h={8} className="ml-1"><path d="M.6 7L6.5 1l6 6" strokeWidth="1.3" /></Icon>
        </div>
        <Icon w={22} h={20} className="ml-3">
          <circle cx="9" cy="9" r="8.5" fill="#1296db" stroke="#fff" />
          <text x="9" y="14.5" textAnchor="middle" fontSize="15" fontWeight="800" fill="#fff" stroke="none">?</text>
          <circle cx="16.5" cy="14" r="5" fill="#f9b21d" stroke="none" />
          <path d="M16.5 11v6" stroke="#fff" strokeWidth="1.5" />
        </Icon>
      </div>
      {apps.map((a) => (
        <button key={a.name} aria-label={a.name} className={`relative flex h-full w-[49px] items-center justify-center ${a.active ? "bg-[#f6f6f6]" : ""}`}>
          <Icon w={24} h={24}>{a.art}</Icon>
          {a.open && <span className={`absolute bottom-0 h-0.5 bg-[#0078d7] ${a.active ? "inset-x-0" : "inset-x-1"}`} />}
        </button>
      ))}
      <button aria-label="Task view" className="flex w-[51px] justify-center">
        <Icon w={17} h={16}><path d="M1.5 1v2M1.5 8v8M5.5 3.5h9v8h-9zM5.5 0v2H16M5.5 15.5v-2H16" strokeWidth="1.3" /><path d="M0 4h3v3H0z" fill="currentColor" stroke="none" /></Icon>
      </button>
      <label dir="rtl" className="flex h-full w-[343px] items-center gap-2.5 border border-[#c6c6c6] bg-white px-[11px]">
        <Icon w={17} h={17}><circle cx="10.5" cy="6" r="5" strokeWidth="1.3" /><path d="M7 9.5L.5 16" strokeWidth="1.3" /></Icon>
        <input aria-label="חיפוש" placeholder="הקלד כאן כדי לחפש" className="w-full bg-transparent font-['Open_Sans',sans-serif] text-base outline-none placeholder:text-[#444]" />
      </label>
      <button aria-label="Start" className="flex w-[49px] justify-center">
        <Icon w={16} h={16}><path d="M0 2.2L7 1.2V7.5H0zM8 1.1L16 0v7.5H8zM0 8.5h7v6.3L0 13.8zM8 8.5h8V16l-8-1.1z" fill="currentColor" stroke="none" /></Icon>
      </button>
    </footer>
  );
}

export default function App() {
  return (
    <div className="relative flex h-screen flex-col overflow-hidden bg-white font-['Noto_Sans','Open_Sans',sans-serif]">
      <div className="absolute inset-x-0 top-0 h-[803px] border-b border-[#c8c8c8]">
        <div className="flex h-[34px] justify-center bg-[#fdd9c5]"><div className="mr-[88px] w-60 rounded-t-xl bg-white" /></div>
        <div className="h-[37px] bg-white" />
        <div className="h-[46px] w-3 bg-[#141414]" />
        <div className="absolute bottom-0 left-0 top-[117px] w-3 bg-[#ebebeb]" />
        <div className="absolute bottom-0 right-0 top-[70px] w-3 border-t border-[#c8c8c8] bg-[#f0f0f0]">
          <div className="mt-[130px] h-[75px] bg-[#b5b5b5]" />
        </div>
      </div>

      <div className="min-h-0 flex-1 p-2.5">
        <main className="relative flex h-full flex-col rounded-t-md border border-[#333] bg-[#535353]">
          <TitleBar />
          <ControlBar />
          <div className="mx-[3px] mb-1 flex min-h-0 flex-1">
            <div className="flex min-w-0 flex-1 flex-col">
              <DocumentTabs />
              <HorizontalRuler />
              <Canvas />
              <StatusBar />
            </div>
            <Dock />
          </div>
          <ToolsPanel />
          <PropertiesPanel />
          <ParagraphPanel />
          <div className="absolute right-40 top-[153px] z-10 w-[241px]"><PanelHead left className="rounded-t" /></div>
          <FindChangeDialog />
        </main>
      </div>

      <Taskbar />
    </div>
  );
}
